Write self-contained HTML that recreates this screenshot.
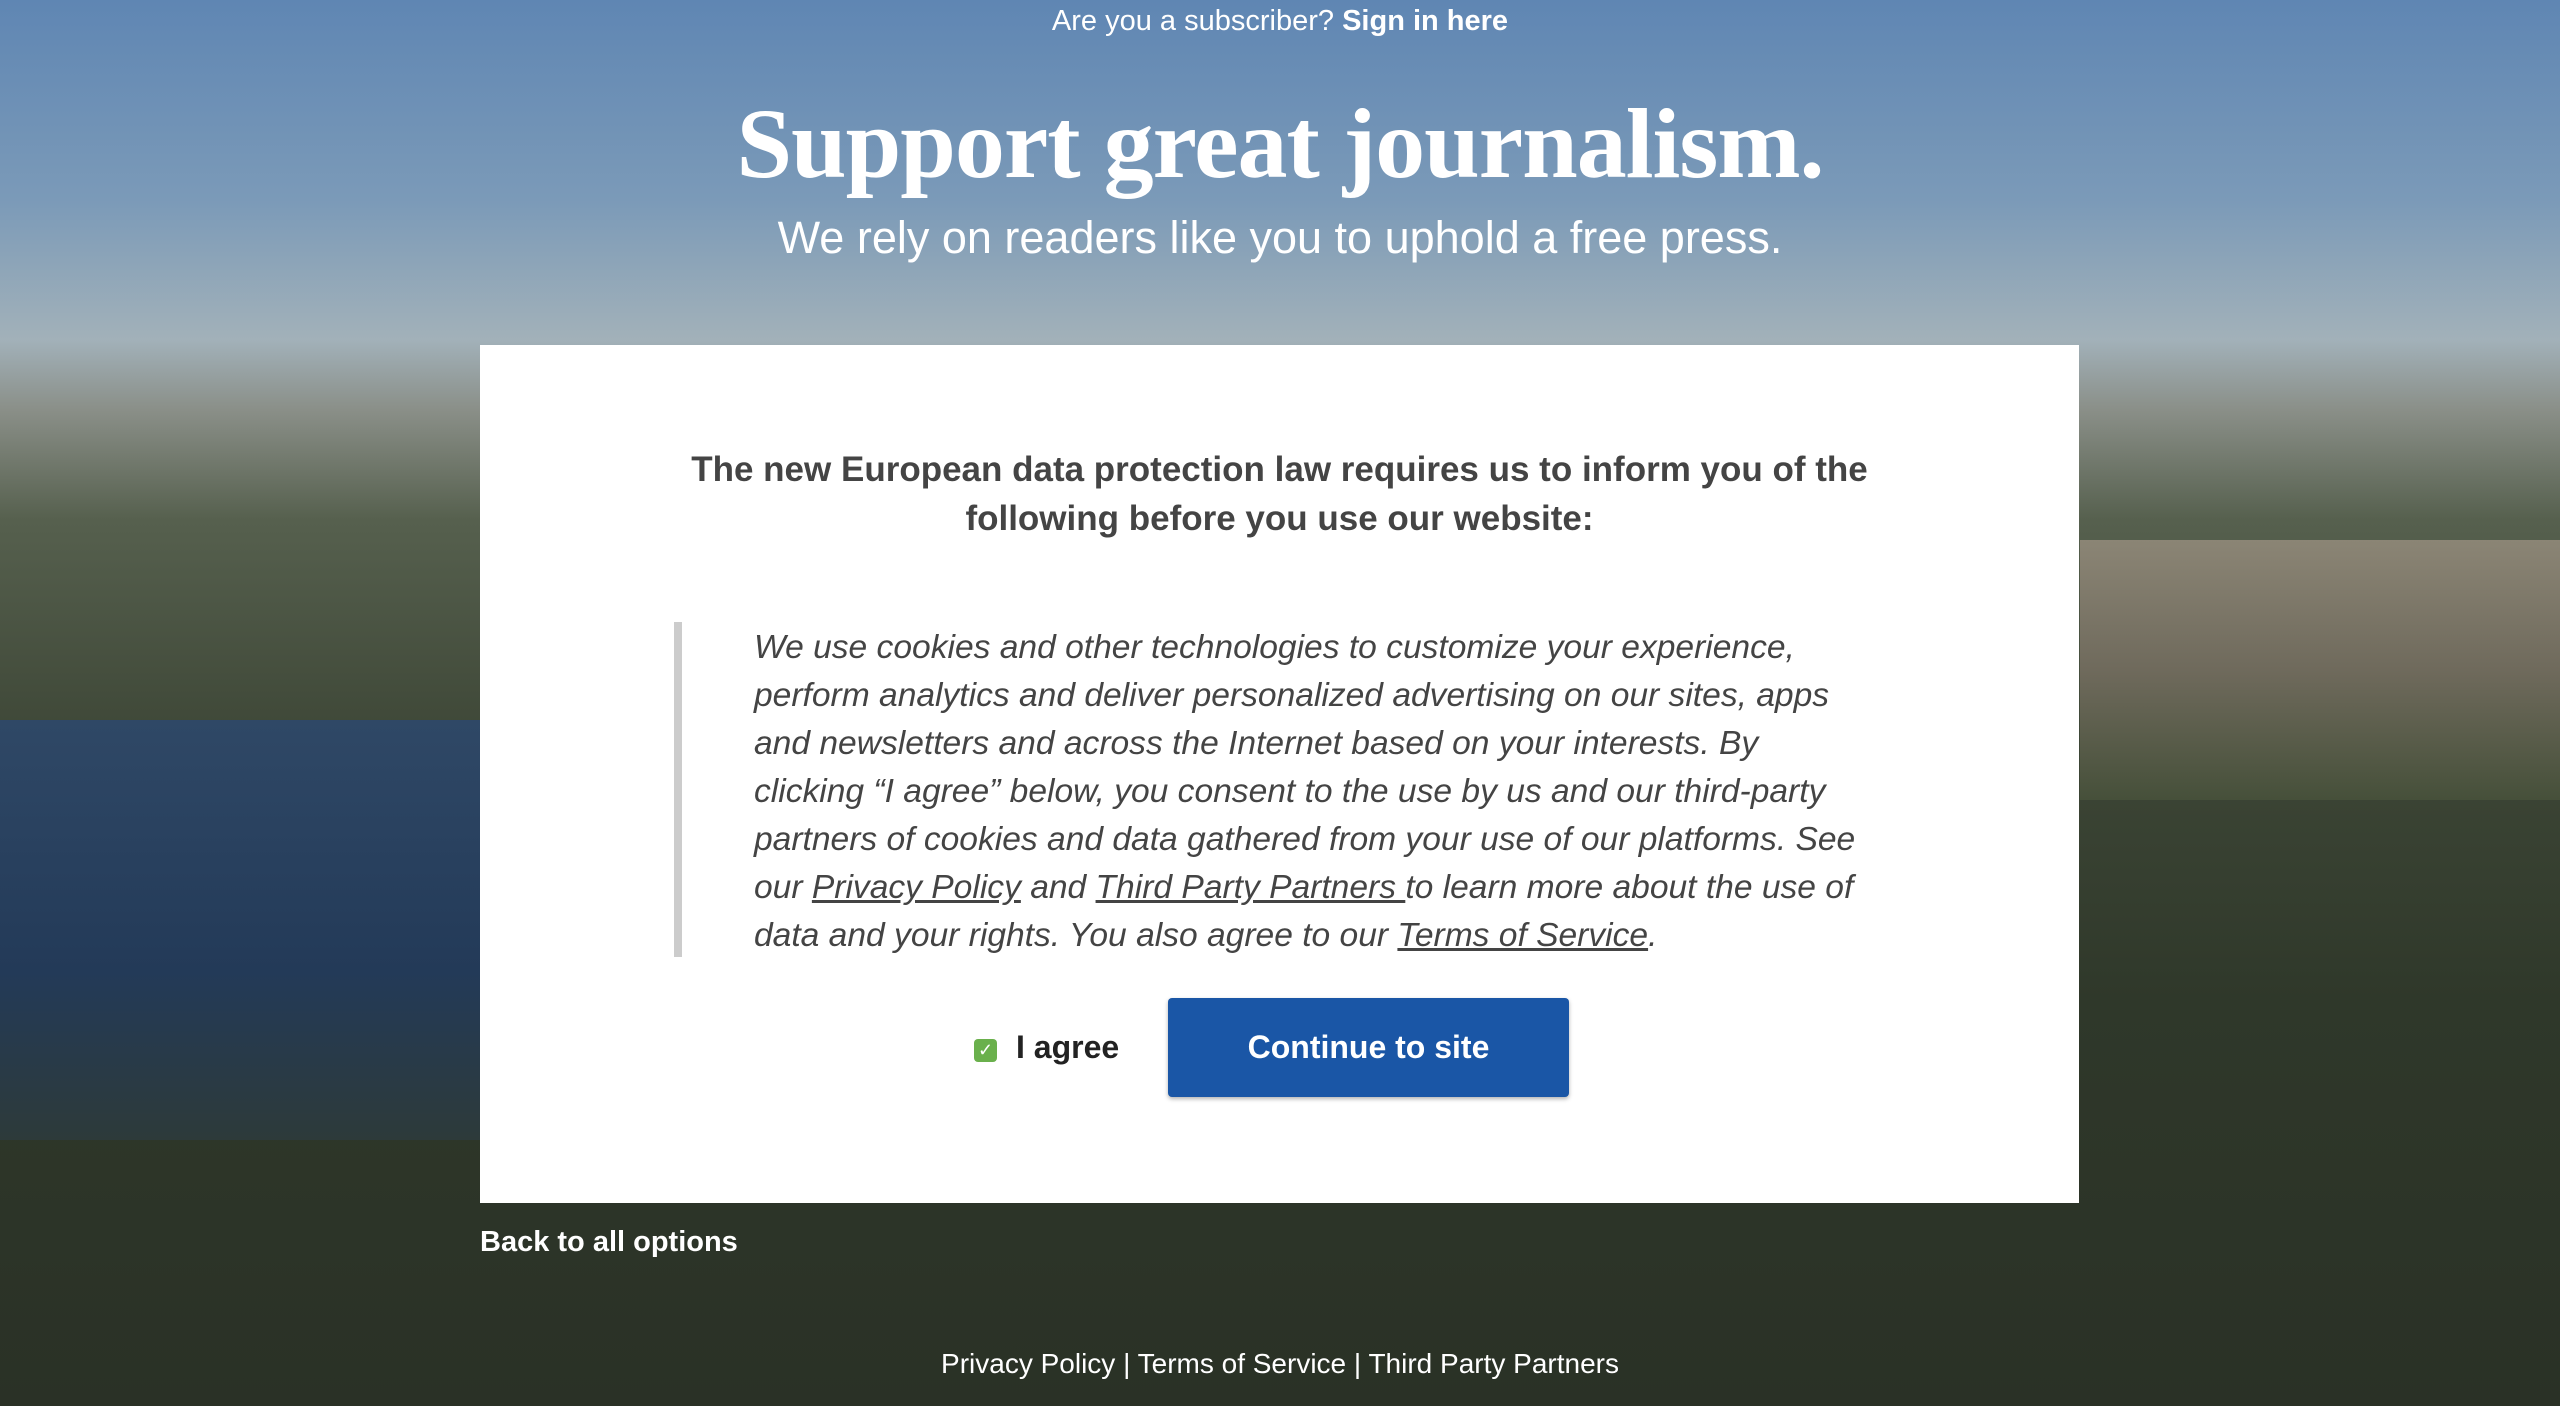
<!DOCTYPE html>
<html><head><meta charset="utf-8"><style>
html,body{margin:0;padding:0}
body{width:2560px;height:1406px;position:relative;overflow:hidden;font-family:"Liberation Sans",sans-serif;
background:linear-gradient(180deg,#5f86b3 0px,#7b9ab8 200px,#a2b1b9 340px,#8a8f88 410px,#56604e 520px,#3d4636 750px,#2f382a 1000px,#2a3126 1406px);}
.water{position:absolute;left:0;top:720px;width:480px;height:420px;background:linear-gradient(180deg,#2f4866,#233a58 60%,#2d3a3a);}
.city{position:absolute;left:2080px;top:540px;width:480px;height:260px;background:linear-gradient(180deg,#8b8575,#6f6a5c 50%,#46503a);}
.top{position:absolute;left:0;width:2560px;text-align:center;color:#fff;font-size:29px;top:5px}
h1{position:absolute;top:86px;left:0;width:2560px;text-align:center;margin:0;color:#fff;font-family:"Liberation Serif",serif;font-weight:bold;font-size:100px;letter-spacing:-1px}
.sub{position:absolute;top:212px;left:0;width:2560px;text-align:center;color:#fff;font-size:45px}
.box{position:absolute;left:480px;top:345px;width:1599px;height:858px;background:#fff}
.hd{position:absolute;top:100px;left:0;width:1599px;text-align:center;font-weight:bold;font-size:35px;line-height:49px;color:#444}
.q{position:absolute;left:194px;top:277px;width:8px;height:335px;background:#ccc}
.qt{position:absolute;left:274px;top:279px;width:1200px;white-space:nowrap;font-style:italic;font-size:33.6px;line-height:48px;color:#444}
.cb{position:absolute;left:494px;top:694px;width:23px;height:23px;background:#6ab04c;border-radius:4px;color:#fff;font-size:18px;text-align:center;line-height:23px}
.ag{position:absolute;left:536px;top:684px;font-size:32px;font-weight:bold;color:#222}
.btn{position:absolute;left:688px;top:653px;width:401px;height:99px;background:#1a56a6;border-radius:4px;color:#fff;font-weight:bold;font-size:32px;text-align:center;line-height:99px;box-shadow:0 2px 4px rgba(0,0,0,.3)}
.back{position:absolute;left:480px;top:1226px;color:#fff;font-weight:bold;font-size:29px}
.foot{position:absolute;top:1348px;left:0;width:2560px;text-align:center;color:#fff;font-size:28px}
</style></head><body>
<div class="water"></div><div class="city"></div>
<div class="top">Are you a subscriber? <b>Sign in here</b></div>
<h1>Support great journalism.</h1>
<div class="sub">We rely on readers like you to uphold a free press.</div>
<div class="box">
<div class="hd">The new European data protection law requires us to inform you of the<br>following before you use our website:</div>
<div class="q"></div>
<div class="qt">We use cookies and other technologies to customize your experience,<br>perform analytics and deliver personalized advertising on our sites, apps<br>and newsletters and across the Internet based on your interests. By<br>clicking “I agree” below, you consent to the use by us and our third-party<br>partners of cookies and data gathered from your use of our platforms. See<br>our <u>Privacy Policy</u> and <u>Third Party Partners </u>to learn more about the use of<br>data and your rights. You also agree to our <u>Terms of Service</u>.</div>
<div class="cb">✓</div><div class="ag">I agree</div>
<div class="btn">Continue to site</div>
</div>
<div class="back">Back to all options</div>
<div class="foot">Privacy Policy | Terms of Service | Third Party Partners</div>
</body></html>
